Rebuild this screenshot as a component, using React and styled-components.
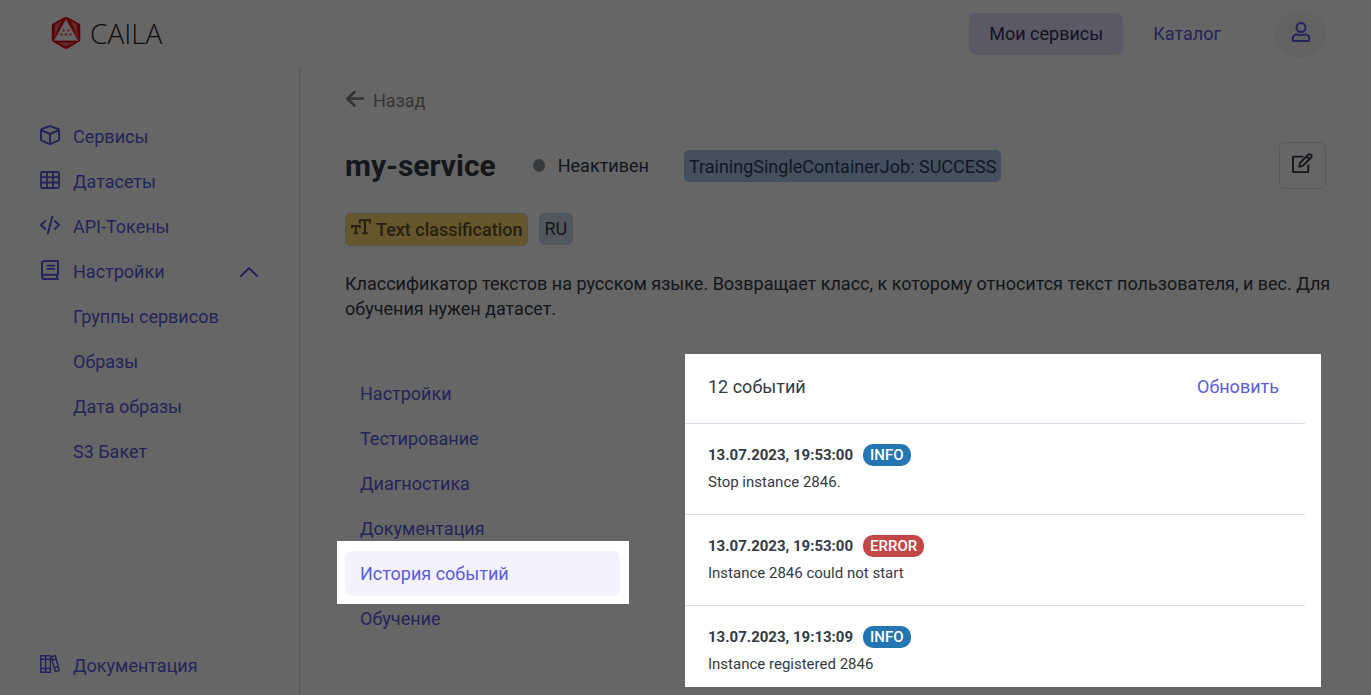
import React from 'react';
import styled, { createGlobalStyle } from 'styled-components';

const GlobalStyle = createGlobalStyle`
  * {
    box-sizing: border-box;
  }

  body {
    margin: 0;
    background: #fff;
    color: #333a44;
    font-family: Roboto, 'Liberation Sans', sans-serif;
    font-size: 18px;
    line-height: 25px;
  }

  a {
    color: #5b5be0;
    text-decoration: none;
  }

  button {
    padding: 0;
    border: none;
    background: none;
    font: inherit;
    cursor: pointer;
  }

  svg {
    display: block;
    flex: none;
  }
`;

const Page = styled.div`
  display: flex;
  flex-direction: column;
  min-height: 100vh;
`;

const Header = styled.header`
  display: flex;
  align-items: center;
  justify-content: space-between;
  height: 69px;
  padding: 0 44px 0 51px;
  border-bottom: 1px solid #f3f3f4;
`;

const Logo = styled.a`
  display: flex;
  align-items: center;
  gap: 9px;
  padding-bottom: 2px;
  color: #1c1c1c;
  font-family: 'Open Sans', sans-serif;
  font-size: 28px;
  font-weight: 300;
`;

const TopNav = styled.nav`
  display: flex;
  align-items: center;
  gap: 10px;
`;

const TopLink = styled.a`
  padding: 8px 20px 9px;
  border-radius: 7px;
  background: ${({ $active }) => ($active ? '#e6deff' : 'transparent')};
  color: ${({ $active }) => ($active ? '#322e5c' : '#5b5be0')};
`;

const Avatar = styled.button`
  display: flex;
  align-items: center;
  justify-content: center;
  width: 53px;
  height: 47px;
  margin-left: 23px;
  padding-bottom: 4px;
  border-radius: 50%;
  background: #f5f5f5;
  color: #5b5be0;
`;

const Body = styled.div`
  display: flex;
  flex: 1;
`;

const Sidebar = styled.aside`
  display: flex;
  flex: none;
  flex-direction: column;
  justify-content: space-between;
  width: 300px;
  padding: 45px 40px 7px;
  border-right: 1px solid #d9dfea;
`;

const SideLink = styled.a`
  display: flex;
  align-items: center;
  gap: 13px;
  height: 45px;
  padding-left: ${({ $nested }) => ($nested ? '33px' : '0')};

  span {
    flex: 1;
  }

  svg {
    margin-bottom: 3px;
  }
`;

const Main = styled.main`
  flex: 1;
  min-width: 0;
  padding: 18px 45px 8px;
`;

const BackLink = styled.a`
  display: flex;
  align-items: center;
  gap: 8px;
  width: fit-content;
  height: 26px;
  color: #868686;
`;

const TitleRow = styled.div`
  display: flex;
  align-items: center;
  height: 47px;
  margin-top: 29px;
`;

const Title = styled.h1`
  margin: 0;
  font-size: 30px;
  font-weight: 700;
  line-height: 36px;
`;

const Status = styled.div`
  display: flex;
  align-items: center;
  gap: 13px;
  margin: 0 35px 0 37px;

  &:before {
    content: '';
    width: 12px;
    height: 13px;
    border-radius: 50%;
    background: #8a929a;
  }
`;

const JobBadge = styled.div`
  padding: 4px 5px 3px;
  border-radius: 5px;
  background: #acc6e8;
  color: #25405f;
`;

const EditButton = styled.button`
  display: flex;
  align-items: center;
  justify-content: center;
  width: 47px;
  height: 47px;
  margin-left: auto;
  padding-bottom: 4px;
  border: 1px solid #dcdeec;
  border-radius: 5px;
  color: #333a44;
`;

const Tags = styled.div`
  display: flex;
  gap: 11px;
  height: 33px;
  margin-top: 24px;
`;

const TypeTag = styled.div`
  display: flex;
  gap: 5px;
  padding: 3px 4px 3px 5px;
  border: 1px solid #d8cfc0;
  border-radius: 5px;
  background: #ffd870;
  color: #5f5228;
  font-weight: 500;
`;

const LangTag = styled.div`
  height: 32px;
  padding: 3px 6px 4px;
  border-radius: 5px;
  background: #cdd8ea;
`;

// the text may run a little into the gutter before it wraps
const Description = styled.p`
  margin: 25px -10px 33px 0;
`;

const Columns = styled.div`
  display: flex;
  align-items: flex-start;
  gap: 65px;
  padding-right: 5px;
`;

const Menu = styled.nav`
  flex: none;
  width: 275px;
  padding-top: 17px;
`;

const MenuLink = styled.a`
  display: block;
  padding: 10px 15px;
  border-radius: 7px;
`;

// the highlighted item is lifted above the shade, on a white plate
const ActiveMenuItem = styled.div`
  position: relative;
  z-index: 2;

  &:before {
    content: '';
    position: absolute;
    inset: -10px -9px -8px -8px;
    z-index: -1;
    background: #fff;
  }

  ${MenuLink} {
    background: #f4f2fe;
  }
`;

const Events = styled.section`
  position: relative;
  z-index: 2;
  flex: 1;
  padding-right: 16px;
  background: #fff;
`;

const EventsHeader = styled.div`
  display: flex;
  justify-content: space-between;
  padding: 20px 26px 24px 23px;
  border-bottom: 1px solid #d5deec;
`;

const RefreshButton = styled.button`
  color: #5b5be0;
`;

const EventList = styled.ul`
  margin: 0;
  padding: 0;
  list-style: none;
`;

const EventItem = styled.li`
  padding: 20px 23px 21px;
  border-bottom: 1px solid #d5deec;
  font-size: 15px;
  line-height: 22px;

  &:last-child {
    padding-bottom: 12px;
    border-bottom: none;
  }
`;

const EventHead = styled.div`
  display: flex;
  gap: 10px;
  margin-bottom: 5px;
  font-weight: 700;
`;

const Level = styled.span`
  padding: 0 7px;
  border-radius: 10px;
  background: ${({ $error }) => ($error ? '#c24747' : '#2476b3')};
  color: #fff;
  font-weight: 500;
`;

const Shade = styled.div`
  position: fixed;
  inset: 0;
  z-index: 1;
  background: rgba(0, 0, 0, 0.6);
  pointer-events: none;
`;

const Icon = ({ children, size = 20, width = 2 }) => (
  <svg
    width={size}
    height={size}
    viewBox="0 0 20 20"
    fill="none"
    stroke="currentColor"
    strokeWidth={width}
    strokeLinecap="round"
    strokeLinejoin="round"
    aria-hidden="true"
  >
    {children}
  </svg>
);

const CubeIcon = () => (
  <Icon>
    <path d="M9.4 1.2 1.8 4Q1 4.3 1 5.2V14.4Q1 15.2 1.8 15.6L9.3 18.8Q10 19.1 10.7 18.8L18.2 15.6Q19 15.2 19 14.4V5.2Q19 4.3 18.2 4L10.6 1.2Q10 1 9.4 1.2ZM1.5 5.3 10 9l8.5-3.7M10 9v9.5" />
  </Icon>
);

const TableIcon = () => (
  <Icon width={1.8}>
    <rect x="1" y="2" width="18" height="16" rx="1.5" />
    <path d="M1 7.200h18M1 12.500h18M7 2v16M13 2v16" />
  </Icon>
);

const CodeIcon = () => (
  <Icon>
    <path d="M5.200 6 1 10l4.200 4M14.800 6 19 10l-4.200 4M12.300 1.800 7.900 18.200" />
  </Icon>
);

const BookIcon = () => (
  <Icon>
    <path d="M18 14.800V1H4.500Q2 1 2 3.500v13Q2 19 4.500 19H18M17 14.800v4M18 14.800H4.500Q2.300 14.800 2 16.800" />
    <path d="M7 5.600h7.500M7 8.800h7.500" strokeWidth="1.800" />
  </Icon>
);

const DocsIcon = () => (
  <Icon width={1.5}>
    <path d="M.8 1.800h9.600v16.400H.8zM5.600 1.800v16.400M.8 5.200h9.600M.8 14.600h9.600M11.300 2.800l4-1 4 14.800-4 1zM12.200 6l4-1M14.200 13.800l4-1" />
  </Icon>
);

const ChevronIcon = () => (
  <Icon>
    <path d="M2 16 10 8l8 8" />
  </Icon>
);

const ArrowIcon = () => (
  <Icon width={2.8}>
    <path d="M9.500 2 2.400 8.700l7.100 6.800M2.600 8.700H17.800" />
  </Icon>
);

const UserIcon = () => (
  <Icon>
    <circle cx="10" cy="5.500" r="4.500" />
    <path d="M6.200 12.600C7.500 12.600 8 13.200 10 13.200s2.500-.6 3.800-.6c2.700 0 4.500 1.900 4.500 4.500V18q0 1-1 1H2.700q-1 0-1-1v-.900c0-2.600 1.800-4.500 4.500-4.500Z" />
  </Icon>
);

const EditIcon = () => (
  <Icon size={21} width={1.800}>
    <path d="M10.200 3.500H1v14.700h14.500v-6.500" />
    <path d="M7 13.200l.5-3.600 8-8q1.200-1 2.500.2t.2 2.500l-8 8zM14 3.200l2.800 2.800" />
  </Icon>
);

const TextSizeIcon = () => (
  <svg width="20" height="20" viewBox="0 0 20 20" fill="none" stroke="currentColor" strokeWidth="2" aria-hidden="true">
    <path d="M8.800 6.500V3.300h10.400v3.200M14 3.300v13M11.300 16.200h5.400" />
    <path d="M.8 11.300V9.100h8v2.200M4.800 9.100v7M2.900 16.200h3.800" />
  </svg>
);

const LogoMark = () => (
  <svg width="30" height="34" viewBox="0 0 30 34" aria-hidden="true">
    <path
      d="M13 1.600Q15 .6 17 1.600L28 7.600Q29.300 8.400 29.300 10V23.500Q29.300 25 28 25.800L17 32.300Q15 33.400 13 32.300L2 25.800Q.7 25 .7 23.500V10Q.7 8.400 2 7.600Z"
      fill="#e3000f"
    />
    <path d="M10.500 4.500 4 8.500 3.200 22ZM19.500 4.500 26 8.500 26.800 22ZM6 26.500h18L15 30.500Z" fill="#ee6a70" />
    <path d="M15 3.500 27 24.500H3Z" fill="#fff" stroke="#f4a0a4" strokeLinejoin="round" />
    <g fill="#e98080">
      <circle cx="12.700" cy="14.500" r="1.400" />
      <circle cx="17.300" cy="14.500" r="1.400" />
      <circle cx="10.500" cy="18.500" r="1.400" />
      <circle cx="15" cy="18.500" r="1.400" />
      <circle cx="19.500" cy="18.500" r="1.400" />
    </g>
  </svg>
);

const sideLinks = [
  { label: 'Сервисы', icon: <CubeIcon /> },
  { label: 'Датасеты', icon: <TableIcon /> },
  { label: 'API-Токены', icon: <CodeIcon /> },
  { label: 'Настройки', icon: <BookIcon />, open: true },
];

const settingsLinks = ['Группы сервисов', 'Образы', 'Дата образы', 'S3 Бакет'];

const menuLinks = ['Настройки', 'Тестирование', 'Диагностика', 'Документация', 'История событий', 'Обучение'];

const events = [
  { id: 1, time: '13.07.2023, 19:53:00', level: 'INFO', message: 'Stop instance 2846.' },
  { id: 2, time: '13.07.2023, 19:53:00', level: 'ERROR', message: 'Instance 2846 could not start' },
  { id: 3, time: '13.07.2023, 19:13:09', level: 'INFO', message: 'Instance registered 2846' },
];

const App = () => {
  const activeMenu = 'История событий';

  return (
    <>
      <GlobalStyle />
      <Page>
        <Header>
          <Logo href="#">
            <LogoMark />
            CAILA
          </Logo>
          <TopNav>
            <TopLink href="#" $active>Мои сервисы</TopLink>
            <TopLink href="#">Каталог</TopLink>
            <Avatar type="button" aria-label="Профиль">
              <UserIcon />
            </Avatar>
          </TopNav>
        </Header>
        <Body>
          <Sidebar>
            <nav>
              {sideLinks.map(({ label, icon, open }) => (
                <SideLink key={label} href="#">
                  {icon}
                  <span>{label}</span>
                  {open && <ChevronIcon />}
                </SideLink>
              ))}
              {settingsLinks.map((label) => (
                <SideLink key={label} href="#" $nested>{label}</SideLink>
              ))}
            </nav>
            <SideLink href="#">
              <DocsIcon />
              <span>Документация</span>
            </SideLink>
          </Sidebar>
          <Main>
            <BackLink href="#">
              <ArrowIcon />
              Назад
            </BackLink>
            <TitleRow>
              <Title>my-service</Title>
              <Status>Неактивен</Status>
              <JobBadge>TrainingSingleContainerJob: SUCCESS</JobBadge>
              <EditButton type="button" aria-label="Редактировать">
                <EditIcon />
              </EditButton>
            </TitleRow>
            <Tags>
              <TypeTag>
                <TextSizeIcon />
                Text classification
              </TypeTag>
              <LangTag>RU</LangTag>
            </Tags>
            <Description>
              Классификатор текстов на русском языке. Возвращает класс, к которому относится текст пользователя, и вес. Для обучения нужен датасет.
            </Description>
            <Columns>
              <Menu>
                {menuLinks.map((label) =>
                  label === activeMenu ? (
                    <ActiveMenuItem key={label}>
                      <MenuLink href="#" aria-current="page">{label}</MenuLink>
                    </ActiveMenuItem>
                  ) : (
                    <MenuLink key={label} href="#">{label}</MenuLink>
                  )
                )}
              </Menu>
              <Events>
                <EventsHeader>
                  <span>12 событий</span>
                  <RefreshButton type="button">Обновить</RefreshButton>
                </EventsHeader>
                <EventList>
                  {events.map(({ id, time, level, message }) => (
                    <EventItem key={id}>
                      <EventHead>
                        <time>{time}</time>
                        <Level $error={level === 'ERROR'}>{level}</Level>
                      </EventHead>
                      {message}
                    </EventItem>
                  ))}
                </EventList>
              </Events>
            </Columns>
          </Main>
        </Body>
      </Page>
      <Shade />
    </>
  );
};

export default App;
